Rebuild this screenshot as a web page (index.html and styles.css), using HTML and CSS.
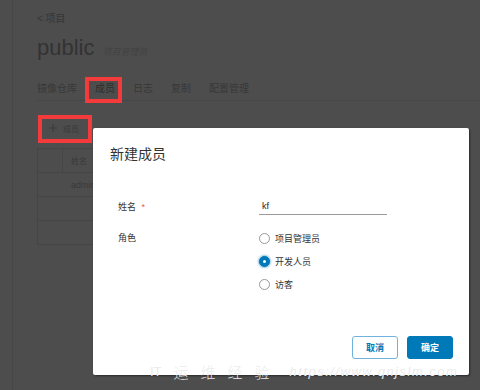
FILE: index.html
```html
<!DOCTYPE html>
<html lang="zh">
<head>
<meta charset="utf-8">
<title>public - 成员</title>
<link rel="stylesheet" href="styles.css">
</head>
<body>
<div class="app">
  <aside class="side"></aside>
  <main class="main">
    <div class="crumb">&lt; 项目</div>
    <div class="title-row">
      <h1 class="title">public</h1>
      <span class="role">项目管理员</span>
    </div>
    <nav class="tabs">
      <span class="tab">镜像仓库</span>
      <span class="tab active">成员</span>
      <span class="tab">日志</span>
      <span class="tab">复制</span>
      <span class="tab">配置管理</span>
    </nav>
    <div class="toolbar">
      <span class="add">
        <svg class="plus" width="8" height="8" viewBox="0 0 8 8"><path d="M4 0v8M0 4h8" stroke="currentColor" stroke-width="1"/></svg>
        成员
      </span>
    </div>
    <div class="tbl">
      <div class="tr th"><span class="c1"></span><span class="c2">姓名</span></div>
      <div class="tr"><span class="c1 nb"></span><span class="c2">admin</span></div>
      <div class="tr"></div>
      <div class="tr"></div>
    </div>
  </main>
</div>

<div class="mark mark-tab"></div>
<div class="mark mark-add"></div>

<section class="modal">
  <h2 class="modal-title">新建成员</h2>
  <form class="form">
    <div class="row">
      <label class="lbl">姓名 <span class="req">*</span></label>
      <div class="input">kf</div>
    </div>
    <div class="row row-role">
      <label class="lbl">角色</label>
      <div class="radios">
        <div class="radio"><span class="dot"></span><span>项目管理员</span></div>
        <div class="radio"><span class="dot on"></span><span>开发人员</span></div>
        <div class="radio"><span class="dot"></span><span>访客</span></div>
      </div>
    </div>
  </form>
  <div class="footer">
    <button class="btn btn-outline" type="button">取消</button>
    <button class="btn btn-primary" type="button">确定</button>
  </div>
</section>

<div class="watermark"><span class="wm-it">IT</span><span class="wm-cn">运维经验</span><span class="wm-url">https://www.qnjslm.com</span></div>
</body>
</html>
```

FILE: styles.css
```css
* { box-sizing: border-box; }
html, body { margin: 0; padding: 0; }
body {
  width: 480px;
  height: 390px;
  overflow: hidden;
  position: relative;
  background: #4d4d4d;
  font-family: "Liberation Sans", "Noto Sans CJK SC", sans-serif;
  color: #363636;
}
.app { display: flex; height: 390px; }
.side { width: 13px; border-right: 1px solid #464646; flex: none; }
.main { flex: 1; padding: 12px 0 0 24px; }

.crumb { font-size: 10px; line-height: 13px; color: #363636; }
.title-row { margin-top: 10px; display: flex; align-items: baseline; gap: 8px; height: 26px; }
.title { margin: 0; font-size: 22px; line-height: 26px; font-weight: 400; color: #333; }
.role { font-size: 9px; font-style: italic; color: #434343; }

.tabs { margin-top: 17px; display: flex; gap: 18px; border-bottom: 1px solid #464646; height: 23px; }
.tab { font-size: 10px; line-height: 22px; color: #383838; }
.tab.active { color: #2e2e2e; }

.toolbar { margin-top: 17px; height: 20px; display: flex; align-items: center; padding-left: 12px; }
.add { display: flex; align-items: center; gap: 6px; font-size: 8px; color: #3a3a3a; }
.plus { display: block; }

.tbl { margin-top: 10px; width: 420px; border: 1px solid #454545; border-bottom: none; }
.tr { height: 24px; border-bottom: 1px solid #454545; display: flex; align-items: center; }
.c1 { width: 25px; height: 100%; border-right: 1px solid #454545; }
.c1.nb { border-right: none; }
.c2 { padding-left: 8px; font-size: 8px; color: #3a3a3a; }
.tr:nth-child(2) .c2 { font-size: 9px; }

.mark { position: absolute; border: 4px solid #f33b3b; }
.mark-tab { left: 85px; top: 77px; width: 37px; height: 26px; }
.mark-add { left: 38px; top: 115px; width: 54px; height: 28px; }

.modal {
  position: absolute;
  left: 93px;
  top: 128px;
  width: 376px;
  height: 247px;
  background: #fff;
  border-radius: 2px;
  box-shadow: 1px 1px 2px rgba(0,0,0,0.45);
  display: flex;
  flex-direction: column;
  padding: 17px 16px 16px 17px;
}
.modal-title { margin: 0; font-size: 14px; line-height: 18px; font-weight: 400; color: #333; }
.form { margin-top: 34px; padding-left: 8px; }
.row { display: grid; grid-template-columns: 141px 128px; align-items: start; }
.row:first-child { height: 20px; }
.lbl { font-size: 9px; line-height: 20px; color: #333; }
.req { color: #e05a5a; margin-left: 3px; }
.input {
  height: 18px;
  border-bottom: 1px solid #9a9a9a;
  font-size: 9px;
  padding: 4px 0 0 3px;
  color: #222;
}
.row-role { margin-top: 10px; }
.row-role .lbl { line-height: 23px; }
.radios { display: flex; flex-direction: column; }
.radio { height: 23px; display: flex; align-items: center; gap: 5px; font-size: 9px; color: #333; }
.dot {
  width: 11px; height: 11px; border-radius: 50%;
  border: 1px solid #9a9a9a; background: #fff; flex: none;
  display: flex; align-items: center; justify-content: center;
}
.dot.on {
  background: #0079b8; border-color: #0079b8;
  box-shadow: 0 0 2px 1px rgba(0,121,184,0.45);
}
.dot.on::after { content: ""; width: 3px; height: 3px; background: #fff; border-radius: 50%; }

.footer { margin-top: auto; display: flex; justify-content: flex-end; gap: 9px; }
.btn {
  width: 46px; height: 23px; border-radius: 3px;
  font-family: inherit; font-size: 9px; font-weight: 700;
  padding: 0; cursor: pointer;
}
.btn-outline { background: #fff; border: 1px solid #6fb3dc; color: #0079b8; }
.btn-primary { background: #0079b8; border: 1px solid #0079b8; color: #fff; }

.watermark {
  position: absolute;
  left: 150px;
  top: 362px;
  display: flex;
  align-items: center;
  height: 18px;
  color: #ececec;
  white-space: nowrap;
}
.wm-it { font-family: "Liberation Sans", sans-serif; font-size: 13px; margin-right: 12px; }
.wm-cn { font-family: "Noto Sans CJK SC", sans-serif; font-weight: 300; font-size: 15px; letter-spacing: 12px; margin-right: 8px; }
.wm-url { font-family: "Liberation Sans", sans-serif; font-size: 13px; letter-spacing: 1.5px; font-style: italic; }
```
